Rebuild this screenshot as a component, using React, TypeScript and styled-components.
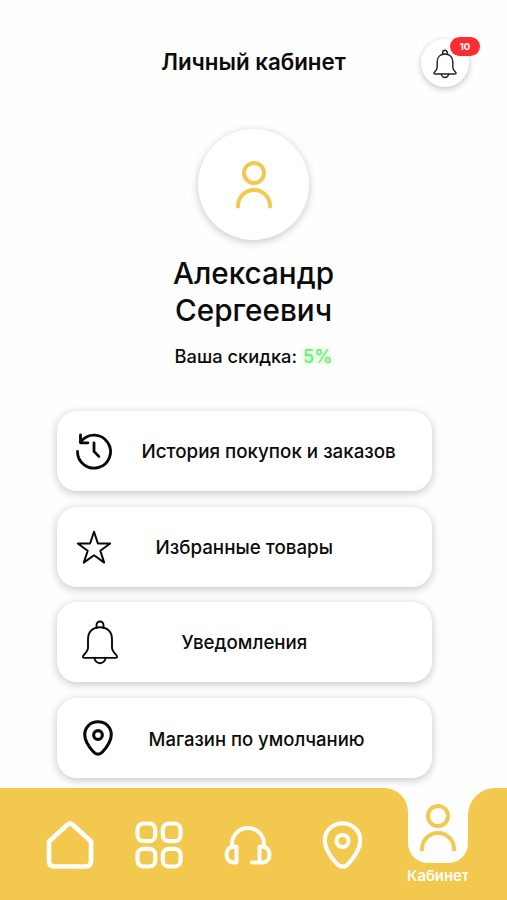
import React from "react";
import styled, { createGlobalStyle } from "styled-components";

const GOLD = "#f2c84f";

const GlobalStyle = createGlobalStyle`
  * { box-sizing: border-box; }
  html, body { margin: 0; padding: 0; background: #fefefe; }
  body { font-family: Inter, "Liberation Sans", sans-serif; color: #0b0b0b; overflow: hidden; }
  svg { display: block; overflow: visible; fill: none; stroke: currentColor; stroke-linecap: round; stroke-linejoin: round; }
`;

const Screen = styled.div`
  width: 507px;
  height: 900px;
  display: flex;
  flex-direction: column;
  overflow: hidden;
`;

const Header = styled.header`
  height: 129px;
  flex: none;
  display: grid;
  grid-template-columns: 86px 1fr 86px;
  padding-top: 39px;
  align-items: start;
`;

const Title = styled.h1`
  grid-column: 2;
  margin: 0;
  text-align: center;
  font-size: 22.3px;
  line-height: 46px;
  font-weight: 600;
  white-space: nowrap;
`;

const BellButton = styled.button`
  position: relative;
  width: 48px;
  height: 48px;
  border: 0;
  padding: 2px 0 0;
  border-radius: 50%;
  background: #fff;
  color: #222;
  display: grid;
  place-items: center;
  box-shadow: 0 2px 6px rgba(0, 0, 0, 0.24);
`;

const Badge = styled.span`
  position: absolute;
  left: 29px;
  top: -2px;
  width: 30px;
  height: 19px;
  border-radius: 10px;
  background: #fb2d30;
  color: #fff;
  font: 700 9.5px/19px Inter, sans-serif;
  text-align: center;
`;

const Profile = styled.section`
  height: 282px;
  flex: none;
  display: flex;
  flex-direction: column;
  align-items: center;
`;

const Avatar = styled.div`
  width: 111px;
  height: 111px;
  border-radius: 50%;
  background: #fff;
  color: ${GOLD};
  display: grid;
  place-items: center;
  box-shadow: 0 2px 9px rgba(0, 0, 0, 0.22);
`;

const Name = styled.h2`
  margin: 15px 0 0;
  width: 200px;
  text-align: center;
  font-size: 29.7px;
  line-height: 36.5px;
  font-weight: 500;
`;

const Discount = styled.p`
  margin: 16px 0 0;
  font-size: 18.3px;
  line-height: 24px;
  font-weight: 500;
`;

const Percent = styled.span`
  margin-left: 1px;
  color: #70ec73;
  text-shadow: 0 0 5px rgba(104, 245, 110, 0.65);
`;

const Menu = styled.nav`
  flex: 1;
  display: flex;
  flex-direction: column;
  gap: 15.7px;
  padding-left: 57px;
`;

const Card = styled.a`
  flex: none;
  width: 375px;
  height: 80px;
  border-radius: 20px;
  background: #fff;
  display: flex;
  align-items: center;
  box-shadow: 0 2px 10px rgba(0, 0, 0, 0.23);
`;

const CardIcon = styled.span<{ $left: number }>`
  width: 62px;
  padding-left: ${(p) => p.$left}px;
  color: #080808;
`;

const CardLabel = styled.span<{ $start: number; $size: number }>`
  margin-left: ${(p) => p.$start}px;
  padding-top: 2px;
  font-size: ${(p) => p.$size}px;
  line-height: 24px;
  font-weight: 500;
  white-space: nowrap;
`;

const TabBar = styled.footer`
  position: relative;
  flex: none;
  height: 112px;
  display: grid;
  grid-template-columns: 408px 60px 39px;
`;

const MainTabs = styled.div`
  background: ${GOLD};
  border-top-right-radius: 24px;
  padding: 33px 0 0 46px;
  display: grid;
  grid-template-columns: 89px 89px 94px 49px;
  align-items: start;
  color: #fffefa;
`;

const ActiveTab = styled.div`
  background: ${GOLD};
  display: flex;
  flex-direction: column;
  align-items: center;
`;

const ActiveIcon = styled.div`
  width: 60px;
  height: 75px;
  flex: none;
  border-radius: 0 0 20px 20px;
  background: #fefefe;
  color: ${GOLD};
  display: flex;
  justify-content: center;
  padding-top: 15.5px;
`;

const ActiveLabel = styled.span`
  margin-top: 3px;
  font-size: 14.8px;
  line-height: 20px;
  font-weight: 600;
  color: #fffefa;
`;

const BarEnd = styled.div`
  background: ${GOLD};
  border-top-left-radius: 27px;
`;

const Person = () => (
  <svg width="36" height="48" viewBox="0 0 36 48" strokeWidth="4">
    <circle cx="18" cy="12" r="10" />
    <path d="M2 45.5V45a16 16 0 0 1 32 0v.5" />
  </svg>
);

const Bell = ({ w, h, stroke }: { w: number; h: number; stroke: number }) => (
  <svg width={w} height={h} viewBox="0 0 36 43" strokeWidth={stroke}>
    <path d="M14.5 7V4a3.5 3.5 0 0 1 7 0v3" />
    <path d="M18 6.2c-7.5 0-12 4.8-12 12v8.3c0 2.7-1 4.3-4 7.2-1.8 1.8-1.3 3.2.8 3.2h30.4c2.1 0 2.6-1.4.8-3.2-3-2.9-4-4.5-4-7.2v-8.3c0-7.2-4.5-12-12-12Z" />
    <path d="M12.5 37a5.5 5.2 0 0 0 11 0" />
  </svg>
);

const History = () => (
  <svg width="36" height="37" viewBox="0 0 36 37" strokeWidth="2.8">
    <path d="M1.5 18.5A16.5 16.5 0 1 0 5.2 8.2L4.5 9" />
    <path d="M4.5 2v7.8h7.4M18 9.8v8.6l4.8 5" />
  </svg>
);

const Star = () => (
  <svg width="36" height="34" viewBox="0 0 36 34" strokeWidth="2" strokeLinejoin="miter">
    <path d="M18 1.8l3.9 11.7h12.3l-9.9 7.3 3.9 11.8L18 25.3 7.8 32.6l3.9-11.8-9.9-7.3h12.3Z" />
  </svg>
);

const Pin = ({ w, h, stroke, hole }: { w: number; h: number; stroke: number; hole: number }) => (
  <svg width={w} height={h} viewBox="0 0 40 48" strokeWidth={stroke}>
    <path d="M20 2.3C9.8 2.3 2.3 10 2.3 19.5c0 8.3 6.2 17 11.8 23.2 3.7 4 8.1 4 11.8 0 5.6-6.2 11.8-14.9 11.8-23.2C37.7 10 30.2 2.3 20 2.3Z" />
    <circle cx="20" cy="20" r={hole} />
  </svg>
);

const Home = () => (
  <svg width="48" height="48" viewBox="0 0 48 48" strokeWidth="4.7">
    <path d="M3 20.5 21.3 3.8q2.7-2.4 5.4 0L45 20.5V40q0 5.5-5.5 5.5h-31Q3 45.5 3 40Z" />
  </svg>
);

const Squares = () => (
  <svg width="48" height="48" viewBox="0 0 48 48" strokeWidth="4.2">
    <rect x="2.5" y="2.5" width="17.7" height="17.7" rx="6" />
    <rect x="27.8" y="2.5" width="17.7" height="17.7" rx="6" />
    <rect x="2.5" y="27.8" width="17.7" height="17.7" rx="6" />
    <rect x="27.8" y="27.8" width="17.7" height="17.7" rx="6" />
  </svg>
);

const Headphones = () => (
  <svg width="48" height="48" viewBox="0 0 48 48" strokeWidth="4">
    <path d="M8 26V23a16 16 0 0 1 32 0v3" />
    <path d="M12.5 25.7v15.7H9.8C5 41.4 2.5 38.2 2.5 33.7s2.5-8 7.3-8Z" />
    <path d="M35.5 25.7h2.7c4.8 0 7.3 3.5 7.3 8s-2.5 7.7-7.3 7.7H28M35.5 25.7v15.7" />
  </svg>
);

const items = [
  { label: "История покупок и заказов", icon: <History />, left: 19, start: 22.5, size: 18.8 },
  { label: "Избранные товары", icon: <Star />, left: 19, start: 36.5, size: 18.8 },
  { label: "Уведомления", icon: <Bell w={36} h={43} stroke={1.9} />, left: 25, start: 62.5, size: 18.7 },
  { label: "Магазин по умолчанию", icon: <Pin w={30} h={36} stroke={4.1} hole={5.8} />, left: 26, start: 29.5, size: 18.5 },
];

export default function App() {
  return (
    <>
      <GlobalStyle />
      <Screen>
        <Header>
          <Title>Личный кабинет</Title>
          <BellButton aria-label="Уведомления">
            <Bell w={24} h={28} stroke={2.2} />
            <Badge>10</Badge>
          </BellButton>
        </Header>
        <Profile>
          <Avatar><Person /></Avatar>
          <Name>Александр Сергеевич</Name>
          <Discount>Ваша скидка: <Percent>5%</Percent></Discount>
        </Profile>
        <Menu>
          {items.map((item) => (
            <Card key={item.label}>
              <CardIcon $left={item.left}>{item.icon}</CardIcon>
              <CardLabel $start={item.start} $size={item.size}>{item.label}</CardLabel>
            </Card>
          ))}
        </Menu>
        <TabBar>
          <MainTabs>
            <Home />
            <Squares />
            <Headphones />
            <Pin w={49} h={48} stroke={4.2} hole={6} />
          </MainTabs>
          <ActiveTab>
            <ActiveIcon><Person /></ActiveIcon>
            <ActiveLabel>Кабинет</ActiveLabel>
          </ActiveTab>
          <BarEnd />
        </TabBar>
      </Screen>
    </>
  );
}
